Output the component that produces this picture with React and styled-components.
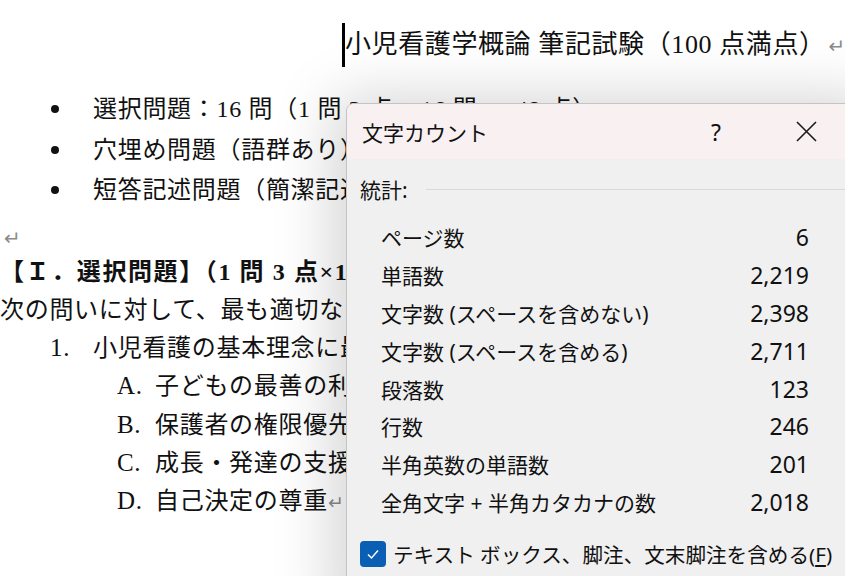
import styled, { createGlobalStyle } from 'styled-components';

const Global = createGlobalStyle`
  html, body { margin: 0; padding: 0; background: #fff; }
  #root { width: 845px; height: 576px; }
`

const Page = styled.div`
  position: relative;
  width: 845px;
  height: 576px;
  overflow: hidden;
  background: #fff;
  color: #111;
  font-family: "Liberation Serif", "Noto Sans CJK JP", serif;
`
const Doc = styled.div`
  display: flex;
  flex-direction: column;
  padding-top: 23px;
`
const Title = styled.div`
  height: 44px;
  line-height: 44px;
  padding-left: 342px;
  font-size: 26px;
  letter-spacing: 0.6px;
  white-space: nowrap;
`
const Caret = styled.span`
  display: inline-block;
  width: 3px;
  height: 44px;
  background: #000;
  vertical-align: top;
`
const Mark = styled.span`
  color: #8a8a8a;
  letter-spacing: 0;
  font-size: ${(p) => (p.small ? '19px' : '20px')};
  margin-left: ${(p) => (p.gap ? '3px' : '0')};
  padding-left: ${(p) => (p.pad ? '4px' : '0')};
  font-family: "DejaVu Sans", sans-serif;
`
const Bullets = styled.ul`
  list-style: none;
  margin: 22px 0 0;
  padding: 0;
`
const Bullet = styled.li`
  height: 40.5px;
  line-height: 40.5px;
  padding-left: 93px;
  position: relative;
  font-size: 24px;
  letter-spacing: 0.7px;
  white-space: nowrap;
  &::before {
    content: '';
    position: absolute;
    left: 51px;
    top: 16px;
    width: 8px;
    height: 8px;
    border-radius: 50%;
    background: #111;
  }
`
const Line = styled.div`
  height: ${(p) => p.h || '38.33px'};
  line-height: ${(p) => p.h || '38.33px'};
  padding-left: ${(p) => p.indent || 0}px;
  font-size: 24px;
  letter-spacing: ${(p) => (p.bold ? '1.6px' : '0.7px')};
  font-weight: ${(p) => (p.bold ? 700 : 400)};
  white-space: nowrap;
  margin-top: ${(p) => p.mt || 0}px;
`
const Num = styled.span`
  display: inline-block;
  width: ${(p) => p.w}px;
  font-size: 25px;
`

const Dialog = styled.div`
  position: absolute;
  left: 346px;
  top: 103px;
  width: 520px;
  height: 500px;
  background: #f0f0f0;
  border: 1px solid #c4c4c4;
  border-radius: 8px 8px 0 0;
  box-shadow: 0 8px 60px 14px rgba(0, 0, 0, 0.17);
  font-family: "Noto Sans", "Noto Sans CJK JP", sans-serif;
  color: #111;
  overflow: hidden;
`
const TitleBar = styled.div`
  display: flex;
  align-items: center;
  height: 55px;
  background: #f8f0f1;
  padding-left: 15px;
  font-size: 21px;
`
const TitleText = styled.div`
  flex: 1;
`
const BarButton = styled.div`
  width: 46px;
  display: flex;
  align-items: center;
  justify-content: center;
  font-size: 23px;
  margin: ${(p) => p.m || 0};
`
const Body = styled.div`
  padding: 18px 0 0 13px;
`
const Section = styled.div`
  display: flex;
  align-items: center;
  height: 24px;
  font-size: 21px;
  &::after {
    content: '';
    flex: 1;
    height: 1px;
    background: #d9d9d9;
    margin-left: 18px;
  }
`
const Stats = styled.div`
  display: grid;
  grid-template-columns: 1fr auto;
  grid-auto-rows: 37.9px;
  align-items: center;
  width: 428px;
  margin: 17px 0 0 21px;
  font-size: 21px;
`
const Value = styled.div`
  text-align: right;
  font-size: 23px;
`
const Check = styled.label`
  display: flex;
  align-items: center;
  margin-top: 20px;
  height: 26px;
  font-size: 20.6px;
  white-space: nowrap;
  u { text-decoration: underline; text-underline-offset: 3px; }
`
const Box = styled.span`
  width: 26px;
  height: 26px;
  border-radius: 4px;
  background: #0a5fb4;
  display: flex;
  align-items: center;
  justify-content: center;
  margin-right: 7px;
`

const stats = [
  ['ページ数', '6'],
  ['単語数', '2,219'],
  ['文字数 (スペースを含めない)', '2,398'],
  ['文字数 (スペースを含める)', '2,711'],
  ['段落数', '123'],
  ['行数', '246'],
  ['半角英数の単語数', '201'],
  ['全角文字 + 半角カタカナの数', '2,018'],
]

const choices = [
  ['A.', '子どもの最善の利益'],
  ['B.', '保護者の権限優先'],
  ['C.', '成長・発達の支援'],
  ['D.', '自己決定の尊重'],
]

function App() {
  return (
    <Page>
      <Global />
      <Doc>
        <Title>
          <Caret />
          小児看護学概論 筆記試験（100 点満点）<Mark gap>↵</Mark>
        </Title>
        <Bullets>
          <Bullet>選択問題：16 問（1 問 3 点 × 16 問 ＝ 48 点）</Bullet>
          <Bullet>穴埋め問題（語群あり）</Bullet>
          <Bullet>短答記述問題（簡潔記述）</Bullet>
        </Bullets>
        <Line h="32px" mt={10}><Mark pad>↵</Mark></Line>
        <Line bold>【Ｉ．選択問題】（1 問 3 点×16 問）</Line>
        <Line>次の問いに対して、最も適切なものを選びなさい。</Line>
        <Line indent={50}><Num w={43}>1.</Num>小児看護の基本理念に最も近いものはどれか。</Line>
        {choices.map(([k, t], i) => (
          <Line key={k} indent={117}>
            <Num w={38}>{k}</Num>{t}{i === 3 && <Mark small>↵</Mark>}
          </Line>
        ))}
      </Doc>

      <Dialog>
        <TitleBar>
          <TitleText>文字カウント</TitleText>
          <BarButton>?</BarButton>
          <BarButton m="0 38px 0 44px">
            <svg width="21" height="21" viewBox="0 0 21 21">
              <path d="M1 1L20 20M20 1L1 20" stroke="#1a1a1a" strokeWidth="1.6" />
            </svg>
          </BarButton>
        </TitleBar>
        <Body>
          <Section>統計:</Section>
          <Stats>
            {stats.map(([label, value]) => [
              <div key={label}>{label}</div>,
              <Value key={label + 'v'}>{value}</Value>,
            ])}
          </Stats>
          <Check>
            <Box>
              <svg width="16" height="16" viewBox="0 0 16 16">
                <path d="M3 8.5L6.5 12L13 4.5" fill="none" stroke="#fff" strokeWidth="1.5" />
              </svg>
            </Box>
            テキスト ボックス、脚注、文末脚注を含める(<u>F</u>)
          </Check>
        </Body>
      </Dialog>
    </Page>
  );
}

export default App;
